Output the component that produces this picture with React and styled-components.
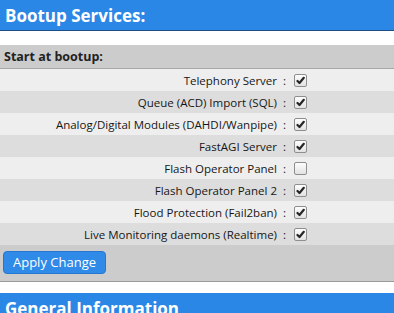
import React from 'react';
import styled, { createGlobalStyle } from 'styled-components';

const GlobalStyle = createGlobalStyle`
  html, body {
    margin: 0;
    padding: 0;
    background: #ffffff;
    font-family: "Open Sans", "Liberation Sans", sans-serif;
  }
`;

const services = [
  { name: 'Telephony Server', on: true },
  { name: 'Queue (ACD) Import (SQL)', on: true },
  { name: 'Analog/Digital Modules (DAHDI/Wanpipe)', on: true },
  { name: 'FastAGI Server', on: true },
  { name: 'Flash Operator Panel', on: false },
  { name: 'Flash Operator Panel 2', on: true },
  { name: 'Flood Protection (Fail2ban)', on: true },
  { name: 'Live Monitoring daemons (Realtime)', on: true },
];

const Page = styled.div`
  width: 394px;
  display: flex;
  flex-direction: column;
`;

const TitleBar = styled.h2`
  margin: 0;
  height: 30px;
  padding: 0 5px;
  display: flex;
  align-items: center;
  background: #2b87e6;
  border-bottom: 1px solid #1d4f86;
  color: #ffffff;
  font-size: 17px;
  font-weight: 700;
  line-height: 1;
`;

const Panel = styled.div`
  margin-top: 14px;
  border-bottom: 1px solid #9a9a9a;
`;

const Caption = styled.div`
  height: 23px;
  padding: 0 4px;
  display: flex;
  align-items: center;
  background: #cccccc;
  border-bottom: 1px solid #a8a8a8;
  color: #222222;
  font-size: 12.5px;
  font-weight: 700;
`;

const Row = styled.div`
  height: 22px;
  display: grid;
  grid-template-columns: 277px 17px auto;
  align-items: center;
  background: ${(p) => (p.$odd ? '#dddddd' : '#eeeeee')};
  color: #161616;
  font-size: 11.5px;
`;

const Label = styled.span`
  text-align: right;
  white-space: nowrap;
`;

const Colon = styled.span`
  text-align: center;
  padding-right: 2px;
`;

const Box = styled.span`
  width: 11px;
  height: 11px;
  border: 1px solid #8e8e8e;
  border-radius: 2px;
  background: linear-gradient(#fdfdfd, #e2e2e2);
  display: flex;
  align-items: center;
  justify-content: center;
`;

const Footer = styled.div`
  height: 36px;
  padding: 5px 3px 0;
  box-sizing: border-box;
  background: #cccccc;
`;

const Button = styled.button`
  height: 23px;
  width: 103px;
  padding: 0;
  border: 1px solid #2677cf;
  border-radius: 4px;
  background: #2f8ae8;
  color: #ffffff;
  font-family: "Open Sans", "Liberation Sans", sans-serif;
  font-size: 13px;
  cursor: pointer;
`;

const Spacer = styled.div`
  height: 11px;
`;

const Check = ({ on }) => (
  <Box>
    {on && (
      <svg width="9" height="9" viewBox="0 0 9 9">
        <path d="M1.5 5 L3.5 7 L7.8 1.8" fill="none" stroke="#262626" strokeWidth="2.2" strokeLinecap="round" strokeLinejoin="round" />
      </svg>
    )}
  </Box>
);

export default function App() {
  return (
    <Page>
      <GlobalStyle />
      <TitleBar>Bootup Services:</TitleBar>
      <Panel>
        <Caption>Start at bootup:</Caption>
        {services.map((s, i) => (
          <Row key={s.name} $odd={i % 2 === 1}>
            <Label>{s.name}</Label>
            <Colon>:</Colon>
            <Check on={s.on} />
          </Row>
        ))}
        <Footer>
          <Button>Apply Change</Button>
        </Footer>
      </Panel>
      <Spacer />
      <TitleBar>General Information</TitleBar>
    </Page>
  );
}
